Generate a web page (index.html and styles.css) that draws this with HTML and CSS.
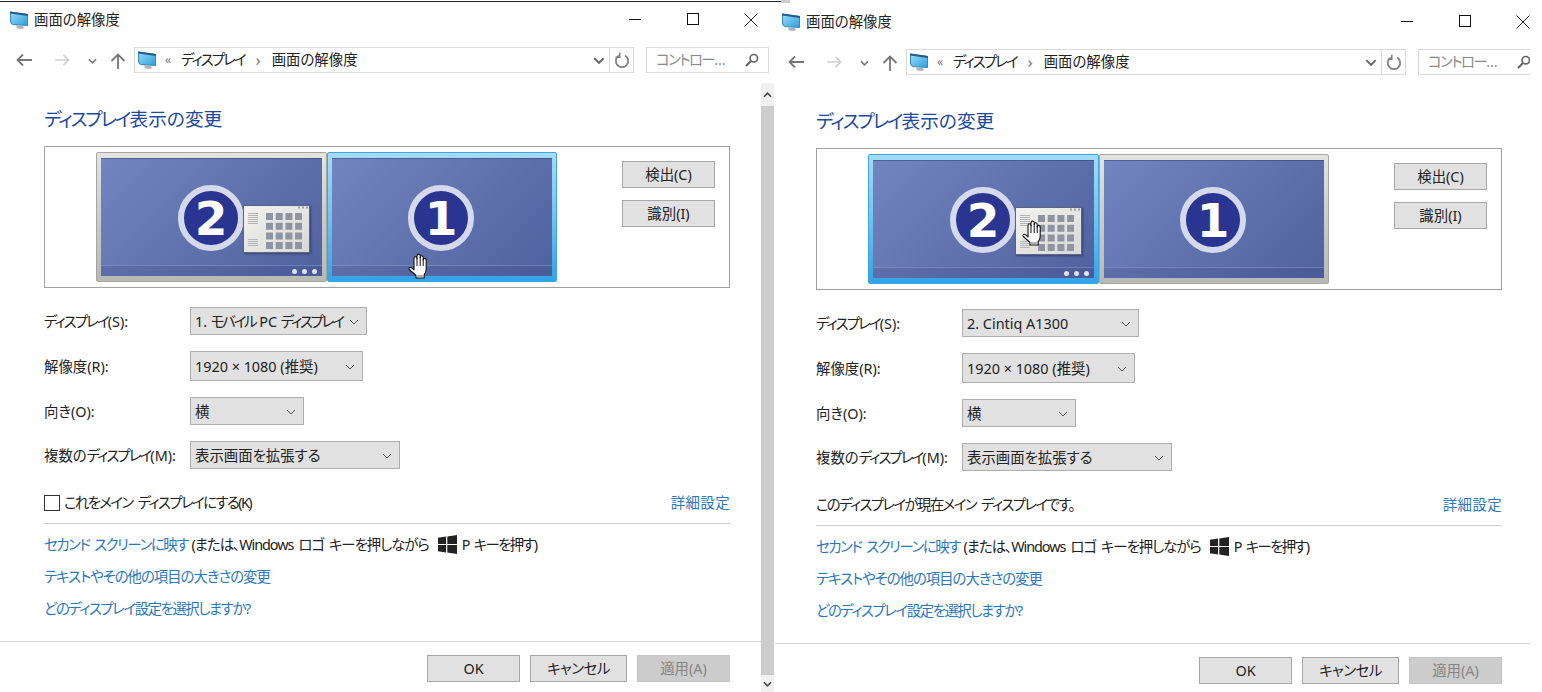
FILE: index.html
```html
<!DOCTYPE html>
<html lang="ja">
<head>
<meta charset="utf-8">
<title>画面の解像度</title>
<link rel="stylesheet" href="styles.css">
</head>
<body>
<svg class="defs" width="0" height="0" aria-hidden="true">
  <defs>
    <linearGradient id="scr" x1="0" y1="0" x2="1" y2="1"><stop offset="0" stop-color="#9adcf7"/><stop offset="1" stop-color="#2f9fdc"/></linearGradient>
    <linearGradient id="cal-bg" x1="0" y1="0" x2="1" y2="1"><stop offset="0" stop-color="#f2f2ee"/><stop offset="1" stop-color="#d8d8d4"/></linearGradient>
    <symbol id="i-monitor" viewBox="0 0 18 18">
      <path d="M6 14.500l7 .5 1 2-2 1-5-.5z" fill="#aeb3b8"/>
      <path d="M.5 1 L17.500 3.500 V14.500 L3 13.500 Q.5 13 .5 10z" fill="url(#scr)" stroke="#3a86b8" stroke-width="1"/>
      <path d="M0 .5 L18 3 V5 L0 2.500z" fill="#1f5f90"/>
    </symbol>
    <symbol id="i-chev" viewBox="0 0 10 6"><path d="M1 1l4 4 4-4" fill="none" stroke="currentColor" stroke-width="1"/></symbol>
    <symbol id="i-chevb" viewBox="0 0 10 6"><path d="M1 1l4 4 4-4" fill="none" stroke="currentColor" stroke-width="1.700"/></symbol>
    <symbol id="i-win" viewBox="0 0 20 20"><path d="M0 3l8.500-1.300V9.400H0zM9.800 1.500L20 0v9.400H9.800zM0 10.600h8.500v7.700L0 17zM9.800 10.600H20V20L9.800 18.500z" fill="#222"/></symbol>
    <symbol id="i-hand" viewBox="0 0 22 26">
      <path d="M6 17V5.500q0-1.800 1.500-1.800T9 5.500V3q0-1.900 1.600-1.900T12.200 3V4.500q0-1.700 1.500-1.700t1.500 1.700V7q0-1.600 1.500-1.600T18.200 7V16q0 3.500-2 5.500v3.500H8v-2.500L1.300 16.500q-.9-1.700.6-2.200q1.600-.4 4.100 2.700z" fill="#fff" stroke="#111" stroke-width="1.100" stroke-linejoin="round"/>
      <path d="M9 5v8M12.200 4v9M15.200 6v7" stroke="#111" stroke-width="1" fill="none"/>
      <path d="M8.500 23h7.500" stroke="#999" stroke-width="1.500"/>
    </symbol>
    <symbol id="i-cal" viewBox="0 0 67 49">
      <rect x=".5" y=".5" width="66" height="47" fill="url(#cal-bg)" stroke="#5b6486"/>
      <path d="M55 2.500h2M59 2.500h2M63 2.500h2" stroke="#9a9aa0" stroke-width="2"/>
      <path d="M5 8.500h10M5 10.500h10M5 12.500h10M5 14.500h10M5 16.500h10M5 18.500h10M5 34.500h10M5 36.500h10M5 38.500h10M5 40.500h10" stroke="#b2b4ba" stroke-width="1"/>
      <path d="M23 11.500h36M23 21.200h36M23 30.900h36M23 40.600h36" stroke="#8f94a3" stroke-width="7" stroke-dasharray="7 2.700"/>
    </symbol>
  </defs>
</svg>

<div class="topline"></div>
<div class="topchunk"></div>

<section class="win win--left">
  <div class="frame">
    <header class="titlebar">
      <svg class="ico-title"><use href="#i-monitor"/></svg>
      <span class="title-text">画面の解像度</span>
      <div class="controls">
        <svg class="ctl" viewBox="0 0 14 14"><path d="M1 6.500h12" stroke="#111" fill="none"/></svg>
        <svg class="ctl" viewBox="0 0 14 14"><rect x="1.500" y=".5" width="11" height="11" stroke="#111" fill="none"/></svg>
        <svg class="ctl" viewBox="0 0 14 14"><path d="M.5.5l13 13M13.500.5l-13 13" stroke="#222" fill="none"/></svg>
      </div>
    </header>
    <nav class="navbar">
      <svg class="nav-ico nav-back" viewBox="0 0 16 14"><path d="M16 7H1.500M7 1.500L1.500 7 7 12.500" fill="none" stroke="#777" stroke-width="1.800"/></svg>
      <svg class="nav-ico nav-fwd" viewBox="0 0 16 14"><path d="M0 7h14.500M9 1.500L14.500 7 9 12.500" fill="none" stroke="#d0d0d0" stroke-width="1.800"/></svg>
      <svg class="nav-chev"><use href="#i-chevb"/></svg>
      <svg class="nav-ico nav-up" viewBox="0 0 16 16"><path d="M8 16V1.500M1.500 8L8 1.500 14.500 8" fill="none" stroke="#777" stroke-width="1.800"/></svg>
      <div class="address">
        <svg class="ico-addr"><use href="#i-monitor"/></svg>
        <span class="crumb-more">«</span>
        <span class="kana">ディスプレイ</span>
        <span class="crumb-sep">›</span>
        <span class="crumb">画面の解像度</span>
        <svg class="addr-chev"><use href="#i-chevb"/></svg>
        <span class="refresh"><svg viewBox="0 0 16 16"><path d="M5 3.500a6.200 6.200 0 1 0 6 0" fill="none" stroke="#808080" stroke-width="1.700"/><path d="M5.800 .8v4.400H1.600" fill="none" stroke="#808080" stroke-width="1.500"/></svg></span>
      </div>
      <div class="search">
        <span class="search-text">コントロー…</span>
        <svg class="search-ico" viewBox="0 0 14 14"><circle cx="8.800" cy="5.200" r="3.700" fill="none" stroke="#666" stroke-width="1.700"/><path d="M6 8L1 13" stroke="#666" stroke-width="2.200"/></svg>
      </div>
    </nav>
  </div>
  <div class="body">
    <main class="content">
      <h1 class="heading"><span class="kana-lg">ディスプレイ</span>表示の変更</h1>
      <div class="preview">
        <div class="monitor">
          <div class="screen"><div class="taskbar"><i class="dot"></i><i class="dot"></i><i class="dot"></i></div></div>
          <span class="badge badge--two">2</span>
          <svg class="calendar"><use href="#i-cal"/></svg>
        </div>
        <div class="monitor monitor--one monitor--selected">
          <div class="screen"><div class="taskbar"></div></div>
          <span class="badge badge--one">1</span>
          <svg class="hand hand--low"><use href="#i-hand"/></svg>
        </div>
        <div class="side-buttons">
          <span class="btn">検出(C)</span>
          <span class="btn">識別(I)</span>
        </div>
      </div>
      <div class="form">
        <div class="row"><span class="label"><span class="kana">ディスプレイ</span>(S):</span><span class="select select--display"><span>1. <span class="kana">モバイル</span> PC <span class="kana">ディスプレイ</span></span><svg class="sel-chev"><use href="#i-chev"/></svg></span></div>
        <div class="row"><span class="label">解像度(R):</span><span class="select select--res">1920 × 1080 (推奨)<svg class="sel-chev"><use href="#i-chev"/></svg></span></div>
        <div class="row"><span class="label">向き(O):</span><span class="select select--orient">横<svg class="sel-chev"><use href="#i-chev"/></svg></span></div>
        <div class="row"><span class="label">複数の<span class="kana">ディスプレイ</span>(M):</span><span class="select select--multi">表示画面を拡張する<svg class="sel-chev"><use href="#i-chev"/></svg></span></div>
      </div>
      <div class="main-row">
        <span class="check"></span><span class="check-label">これをメイン ディスプレイにする(K)</span>
        <a class="link advanced">詳細設定</a>
      </div>
      <div class="links">
        <p class="link-row"><a class="link tight-l">セカンド スクリーンに映す</a> <span class="tight-s">(または、Windows ロゴ キーを押しながら</span><svg class="win-logo"><use href="#i-win"/></svg><span class="tight-p">P キーを押す)</span></p>
        <p class="link-row"><a class="link tight-m">テキストやその他の項目の大きさの変更</a></p>
        <p class="link-row"><a class="link tight-l">どのディスプレイ設定を選択しますか?</a></p>
      </div>
      <footer class="footer">
        <span class="btn">OK</span>
        <span class="btn btn--cancel">キャンセル</span>
        <span class="btn btn--disabled">適用(A)</span>
      </footer>
    </main>
    <aside class="scrollbar">
      <span class="sb-btn sb-btn--up"><svg class="sb-chev sb-chev--up"><use href="#i-chevb"/></svg></span>
      <span class="sb-thumb"></span>
      <span class="sb-btn sb-btn--down"><svg class="sb-chev"><use href="#i-chevb"/></svg></span>
    </aside>
  </div>
</section>

<section class="win win--right">
  <div class="frame">
    <header class="titlebar">
      <svg class="ico-title"><use href="#i-monitor"/></svg>
      <span class="title-text">画面の解像度</span>
      <div class="controls">
        <svg class="ctl" viewBox="0 0 14 14"><path d="M1 6.500h12" stroke="#111" fill="none"/></svg>
        <svg class="ctl" viewBox="0 0 14 14"><rect x="1.500" y=".5" width="11" height="11" stroke="#111" fill="none"/></svg>
        <svg class="ctl" viewBox="0 0 14 14"><path d="M.5.5l13 13M13.500.5l-13 13" stroke="#222" fill="none"/></svg>
      </div>
    </header>
    <nav class="navbar">
      <svg class="nav-ico nav-back" viewBox="0 0 16 14"><path d="M16 7H1.500M7 1.500L1.500 7 7 12.500" fill="none" stroke="#777" stroke-width="1.800"/></svg>
      <svg class="nav-ico nav-fwd" viewBox="0 0 16 14"><path d="M0 7h14.500M9 1.500L14.500 7 9 12.500" fill="none" stroke="#d0d0d0" stroke-width="1.800"/></svg>
      <svg class="nav-chev"><use href="#i-chevb"/></svg>
      <svg class="nav-ico nav-up" viewBox="0 0 16 16"><path d="M8 16V1.500M1.500 8L8 1.500 14.500 8" fill="none" stroke="#777" stroke-width="1.800"/></svg>
      <div class="address">
        <svg class="ico-addr"><use href="#i-monitor"/></svg>
        <span class="crumb-more">«</span>
        <span class="kana">ディスプレイ</span>
        <span class="crumb-sep">›</span>
        <span class="crumb">画面の解像度</span>
        <svg class="addr-chev"><use href="#i-chevb"/></svg>
        <span class="refresh"><svg viewBox="0 0 16 16"><path d="M5 3.500a6.200 6.200 0 1 0 6 0" fill="none" stroke="#808080" stroke-width="1.700"/><path d="M5.800 .8v4.400H1.600" fill="none" stroke="#808080" stroke-width="1.500"/></svg></span>
      </div>
      <div class="search">
        <span class="search-text">コントロー…</span>
        <svg class="search-ico" viewBox="0 0 14 14"><circle cx="8.800" cy="5.200" r="3.700" fill="none" stroke="#666" stroke-width="1.700"/><path d="M6 8L1 13" stroke="#666" stroke-width="2.200"/></svg>
      </div>
    </nav>
  </div>
  <div class="body">
    <main class="content">
      <h1 class="heading"><span class="kana-lg">ディスプレイ</span>表示の変更</h1>
      <div class="preview">
        <div class="monitor monitor--selected">
          <div class="screen"><div class="taskbar"><i class="dot"></i><i class="dot"></i><i class="dot"></i></div></div>
          <span class="badge badge--two">2</span>
          <svg class="calendar"><use href="#i-cal"/></svg>
          <svg class="hand hand--high"><use href="#i-hand"/></svg>
        </div>
        <div class="monitor monitor--one">
          <div class="screen"><div class="taskbar"></div></div>
          <span class="badge badge--one">1</span>
        </div>
        <div class="side-buttons">
          <span class="btn">検出(C)</span>
          <span class="btn">識別(I)</span>
        </div>
      </div>
      <div class="form">
        <div class="row"><span class="label"><span class="kana">ディスプレイ</span>(S):</span><span class="select select--display">2. Cintiq A1300<svg class="sel-chev"><use href="#i-chev"/></svg></span></div>
        <div class="row"><span class="label">解像度(R):</span><span class="select select--res">1920 × 1080 (推奨)<svg class="sel-chev"><use href="#i-chev"/></svg></span></div>
        <div class="row"><span class="label">向き(O):</span><span class="select select--orient">横<svg class="sel-chev"><use href="#i-chev"/></svg></span></div>
        <div class="row"><span class="label">複数の<span class="kana">ディスプレイ</span>(M):</span><span class="select select--multi">表示画面を拡張する<svg class="sel-chev"><use href="#i-chev"/></svg></span></div>
      </div>
      <div class="main-row">
        <span class="check-label">このディスプレイが現在メイン ディスプレイです。</span>
        <a class="link advanced">詳細設定</a>
      </div>
      <div class="links">
        <p class="link-row"><a class="link tight-l">セカンド スクリーンに映す</a> <span class="tight-s">(または、Windows ロゴ キーを押しながら</span><svg class="win-logo"><use href="#i-win"/></svg><span class="tight-p">P キーを押す)</span></p>
        <p class="link-row"><a class="link tight-m">テキストやその他の項目の大きさの変更</a></p>
        <p class="link-row"><a class="link tight-l">どのディスプレイ設定を選択しますか?</a></p>
      </div>
      <footer class="footer">
        <span class="btn">OK</span>
        <span class="btn btn--cancel">キャンセル</span>
        <span class="btn btn--disabled">適用(A)</span>
      </footer>
    </main>
  </div>
</section>
</body>
</html>
```

FILE: styles.css
```css
* { box-sizing: border-box; }
html, body { margin: 0; height: 692px; }
body {
  width: 1542px;
  overflow: hidden;
  display: flex;
  align-items: flex-start;
  background: #fff;
  color: #222;
  font-family: "Noto Sans", "Noto Sans CJK JP", sans-serif;
  font-feature-settings: "palt";
  font-size: 14.4px;
  line-height: 20px;
  position: relative;
}
.defs { position: absolute; }
.topline { position: absolute; left: 0; top: 1px; width: 781px; height: 1px; background: #222; z-index: 3; }
.topchunk { position: absolute; left: 781px; top: 0; width: 9px; height: 3px; background: #ccc; z-index: 3; }

.kana { letter-spacing: -1.9px; }
.select .kana { letter-spacing: -2.2px; }
.kana-lg { letter-spacing: -2px; }
.tight-s { letter-spacing: -1.05px; word-spacing: 2.5px; }
.tight-m { letter-spacing: -1px; }
.tight-p { letter-spacing: -1.7px; word-spacing: 3px; }
.tight-l { letter-spacing: -1.45px; word-spacing: 2.5px; }

.win { height: 692px; flex: none; overflow: hidden; padding-top: 2px; }
.win--left { width: 775px; position: relative; z-index: 2; background: #fff; }
.win--right { width: 758px; margin-left: -3px; padding-top: 4px; }

.frame { width: 772px; }
.titlebar { height: 36px; display: flex; align-items: center; padding: 0 14px 0 10px; }
.ico-title { width: 18px; height: 18px; margin-right: 6px; }
.controls { margin-left: auto; display: flex; gap: 44px; align-items: center; }
.ctl { width: 14px; height: 14px; display: block; }

.navbar { height: 45px; padding: 9px 0 0 16px; display: flex; align-items: flex-start; }
.nav-ico { display: block; flex: none; }
.nav-back { width: 16px; height: 14px; margin-top: 6px; }
.nav-fwd { width: 15px; height: 14px; margin: 6px 0 0 23px; }
.nav-chev { width: 9px; height: 6px; margin: 11px 0 0 18px; color: #777; flex: none; }
.nav-up { width: 16px; height: 16px; margin: 6px 0 0 13px; }
.address {
  width: 500px; height: 26px; margin-left: 8px;
  border: 1px solid #d9d9d9;
  display: flex; align-items: center; padding-left: 3px;
  color: #222; flex: none;
}
.ico-addr { width: 18px; height: 18px; margin-right: 9px; flex: none; }
.crumb-more { width: 16px; color: #777; font-size: 12px; flex: none; }
.crumb-sep { width: 27px; text-align: center; color: #777; font-size: 17px; flex: none; }
.addr-chev { width: 12px; height: 7px; margin-left: auto; margin-right: 4px; color: #666; flex: none; }
.refresh { width: 24px; height: 24px; border-left: 1px solid #d9d9d9; display: flex; align-items: center; justify-content: center; flex: none; }
.refresh svg { width: 16px; height: 16px; }
.search {
  width: 123px; height: 26px; margin-left: 12px;
  border: 1px solid #d9d9d9;
  display: flex; align-items: center; padding: 0 9px;
  color: #8a8a8a; flex: none;
}
.search-text { letter-spacing: -1.5px; white-space: nowrap; }
.search-ico { width: 14px; height: 14px; margin-left: auto; flex: none; }

.body { display: flex; align-items: flex-start; }
.content { width: 761px; flex: none; padding: 22px 31px 0 44px; }
.heading { margin: 0; font-size: 18.7px; line-height: 28px; font-weight: 400; color: #1c4a9c; white-space: nowrap; }

.preview {
  height: 142px; margin-top: 13px;
  border: 1px solid #a0a0a0;
  display: flex; align-items: flex-start;
  padding: 5px 14px 0 51px;
}
.monitor {
  width: 231px; height: 130px; flex: none; position: relative;
  padding: 5px 4px;
  border: 1px solid #a5a5a1;
  border-radius: 2px;
  background: linear-gradient(#e4e4df, #c7c7c3 60%, #b8b8b4);
}
.monitor--one { width: 230px; }
.monitor--selected {
  border-color: #3ba5e6;
  background: linear-gradient(#a5dcf7, #70c3f0 50%, #35a2e6);
}
.screen {
  height: 100%;
  display: flex; flex-direction: column; justify-content: flex-end;
  background: linear-gradient(135deg, #7285c0, #6073ae 50%, #4f62a0);
  box-shadow: inset 0 1px 0 rgba(40, 55, 110, .45);
}
.taskbar {
  height: 11px;
  display: flex; align-items: center; justify-content: flex-end; gap: 5px;
  padding-right: 5px;
  background: rgba(35, 45, 100, .12);
  border-top: 1px solid rgba(190, 200, 235, .3);
}
.dot { width: 5px; height: 5px; border-radius: 50%; background: #dfe3f3; }
.badge {
  position: absolute; top: 32px;
  width: 66px; height: 66px;
  border: 6px solid #d5d9ec; border-radius: 50%;
  background: #2a3592; color: #fff;
  display: flex; align-items: center; justify-content: center;
  font-family: "DejaVu Sans", sans-serif;
  font-weight: 700; font-size: 47px; line-height: 1;
}
.badge--two { left: 81px; }
.badge--one { left: 80px; }
.calendar { position: absolute; left: 146px; top: 52px; width: 67px; height: 49px; filter: drop-shadow(1px 1px 1px rgba(20, 30, 70, .5)); }
.hand { position: absolute; width: 22px; height: 26px; z-index: 2; }
.hand--low { left: 80px; top: 100px; }
.hand--high { left: 153px; top: 65px; }
.side-buttons { margin: 9px 0 0 auto; width: 93px; display: flex; flex-direction: column; gap: 12px; flex: none; }

.btn {
  height: 27px; width: 93px;
  display: flex; align-items: center; justify-content: center;
  background: #e1e1e1; border: 1px solid #a6a6a6;
  color: #222; white-space: nowrap;
}
.btn--cancel { width: 97px; letter-spacing: -.5px; }
.btn--disabled { background: #cccccc; border-color: #c4c4c4; color: #858585; }

.form { margin-top: 19px; display: flex; flex-direction: column; gap: 16px; }
.row { display: flex; align-items: center; }
.label { width: 146px; flex: none; white-space: nowrap; padding-top: 2px; }
.select {
  height: 28px; padding: 2px 7px 0 4px;
  display: flex; align-items: center; justify-content: space-between;
  background: #e1e1e1; border: 1px solid #adadad;
  white-space: nowrap;
}
.select--display { width: 177px; }
.select--res { width: 173px; height: 30px; }
.select--orient { width: 114px; }
.select--multi { width: 210px; }
.sel-chev { width: 10px; height: 6px; color: #555; flex: none; }

.main-row {
  margin-top: 20px; height: 35px; padding-bottom: 7px;
  display: flex; align-items: center;
  border-bottom: 1px solid #cfcfcf;
}
.check { width: 16px; height: 16px; border: 1px solid #333; background: #fff; margin-right: 4px; flex: none; }
.check-label { white-space: nowrap; letter-spacing: -1.6px; word-spacing: 3px; }
.link { color: #2b77bb; white-space: nowrap; }
.advanced { margin-left: auto; letter-spacing: .4px; }
.links { margin-top: 9px; display: flex; flex-direction: column; gap: 8px; }
.link-row { margin: 0; height: 24px; display: block; line-height: 24px; white-space: nowrap; }
.win-logo { width: 19px; height: 19px; margin: 0 5px 0 9px; vertical-align: -4px; }

.footer {
  margin: 20px -31px 0 -44px; padding: 13px 31px 0 0;
  border-top: 1px solid #d4d4d4;
  display: flex; justify-content: flex-end; gap: 10px;
}

.scrollbar { width: 13px; height: 609px; display: flex; flex-direction: column; flex: none; }
.sb-btn { height: 23px; background: #f0f0f0; display: flex; align-items: center; justify-content: center; flex: none; }
.sb-btn--down { height: 17px; }
.sb-thumb { flex: 1; background: #cdcdcd; }
.sb-chev { width: 9px; height: 6px; color: #444; }
.sb-chev--up { transform: rotate(180deg); }
```
